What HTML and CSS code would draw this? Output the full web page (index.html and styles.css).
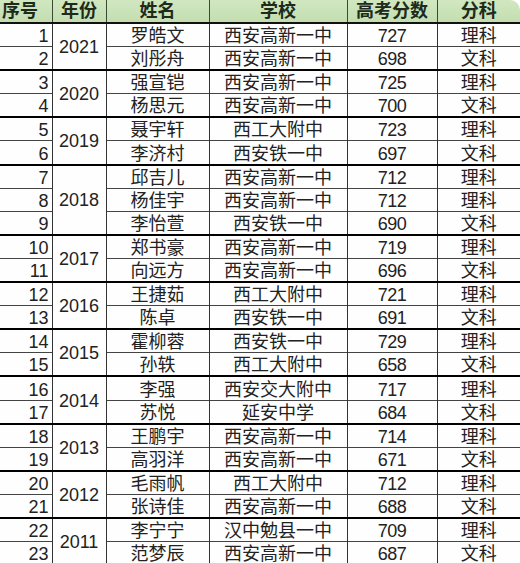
FILE: index.html
```html
<!DOCTYPE html>
<html lang="zh">
<head>
<meta charset="utf-8">
<link rel="stylesheet" href="styles.css">
</head>
<body>
<div class="frame">
<table class="grid">
  <colgroup>
    <col class="c-no"><col class="c-year"><col class="c-name"><col class="c-school"><col class="c-score"><col class="c-type">
  </colgroup>
  <thead>
    <tr><th class="h-no">序号</th><th>年份</th><th>姓名</th><th>学校</th><th>高考分数</th><th>分科</th></tr>
  </thead>
  <tbody>
    <tr class="grp"><td class="no">1</td><td class="year" rowspan="2">2021</td><td>罗皓文</td><td>西安高新一中</td><td class="num">727</td><td>理科</td></tr>
    <tr><td class="no">2</td><td>刘彤舟</td><td>西安高新一中</td><td class="num">698</td><td>文科</td></tr>
    <tr class="grp"><td class="no">3</td><td class="year" rowspan="2">2020</td><td>强宣铠</td><td>西安高新一中</td><td class="num">725</td><td>理科</td></tr>
    <tr><td class="no">4</td><td>杨思元</td><td>西安高新一中</td><td class="num">700</td><td>文科</td></tr>
    <tr class="grp"><td class="no">5</td><td class="year" rowspan="2">2019</td><td>聂宇轩</td><td>西工大附中</td><td class="num">723</td><td>理科</td></tr>
    <tr><td class="no">6</td><td>李济村</td><td>西安铁一中</td><td class="num">697</td><td>文科</td></tr>
    <tr class="grp"><td class="no">7</td><td class="year" rowspan="3">2018</td><td>邱吉儿</td><td>西安高新一中</td><td class="num">712</td><td>理科</td></tr>
    <tr><td class="no">8</td><td>杨佳宇</td><td>西安高新一中</td><td class="num">712</td><td>理科</td></tr>
    <tr><td class="no">9</td><td>李怡萱</td><td>西安铁一中</td><td class="num">690</td><td>文科</td></tr>
    <tr class="grp"><td class="no">10</td><td class="year" rowspan="2">2017</td><td>郑书豪</td><td>西安高新一中</td><td class="num">719</td><td>理科</td></tr>
    <tr><td class="no">11</td><td>向远方</td><td>西安高新一中</td><td class="num">696</td><td>文科</td></tr>
    <tr class="grp"><td class="no">12</td><td class="year" rowspan="2">2016</td><td>王捷茹</td><td>西工大附中</td><td class="num">721</td><td>理科</td></tr>
    <tr><td class="no">13</td><td>陈卓</td><td>西安铁一中</td><td class="num">691</td><td>文科</td></tr>
    <tr class="grp"><td class="no">14</td><td class="year" rowspan="2">2015</td><td>霍柳蓉</td><td>西安铁一中</td><td class="num">729</td><td>理科</td></tr>
    <tr><td class="no">15</td><td>孙轶</td><td>西工大附中</td><td class="num">658</td><td>文科</td></tr>
    <tr class="grp"><td class="no">16</td><td class="year" rowspan="2">2014</td><td>李强</td><td>西安交大附中</td><td class="num">717</td><td>理科</td></tr>
    <tr><td class="no">17</td><td>苏悦</td><td>延安中学</td><td class="num">684</td><td>文科</td></tr>
    <tr class="grp"><td class="no">18</td><td class="year" rowspan="2">2013</td><td>王鹏宇</td><td>西安高新一中</td><td class="num">714</td><td>理科</td></tr>
    <tr><td class="no">19</td><td>高羽洋</td><td>西安高新一中</td><td class="num">671</td><td>文科</td></tr>
    <tr class="grp"><td class="no">20</td><td class="year" rowspan="2">2012</td><td>毛雨帆</td><td>西工大附中</td><td class="num">712</td><td>理科</td></tr>
    <tr><td class="no">21</td><td>张诗佳</td><td>西安高新一中</td><td class="num">688</td><td>文科</td></tr>
    <tr class="grp"><td class="no">22</td><td class="year" rowspan="2">2011</td><td>李宁宁</td><td>汉中勉县一中</td><td class="num">709</td><td>理科</td></tr>
    <tr><td class="no">23</td><td>范梦辰</td><td>西安高新一中</td><td class="num">687</td><td>文科</td></tr>
  </tbody>
</table>
</div>
</body>
</html>
```

FILE: styles.css
```css
html, body {
  margin: 0;
  padding: 0;
  background: #ffffff;
}

.frame {
  width: 520px;
  height: 563px;
  overflow: hidden;
  border-top-right-radius: 10px;
  background: #fefefe;
}

.grid {
  width: 520px;
  border-collapse: collapse;
  table-layout: fixed;
  font-family: "Liberation Sans", "Noto Sans CJK SC", sans-serif;
  font-size: 18px;
  color: #222;
}

.c-no { width: 52px; }
.c-year { width: 54px; }
.c-name { width: 103px; }
.c-school { width: 138px; }
.c-score { width: 90px; }
.c-type { width: 83px; }

.grid th {
  height: 22px;
  padding: 0;
  font-weight: 700;
  font-size: 18px;
  color: #1e2a1a;
  text-align: center;
  vertical-align: middle;
  line-height: 20px;
  background: linear-gradient(#d0e7c0, #c3ddb0);
  border-left: 1px solid #3a4a34;
  border-bottom: 2px solid #111;
}

.grid th:first-child { border-left: none; }
.grid th.h-no { text-align: left; padding-left: 2px; }

.grid td {
  height: 22.1px;
  padding: 0;
  text-align: center;
  vertical-align: bottom;
  line-height: 20px;
  white-space: nowrap;
  border-left: 1px solid #333;
  border-top: 1px solid #444;
}

.grid td:first-child { border-left: none; }

.grid tr.grp td { border-top: 2px solid #000; }
.grid tbody tr:first-child td { border-top: none; }

.grid td.no {
  text-align: right;
  padding-right: 3px;
}

.grid td.num {
  letter-spacing: -0.5px;
}

.grid td.year {
  vertical-align: middle;
  padding-top: 1px;
}
```
